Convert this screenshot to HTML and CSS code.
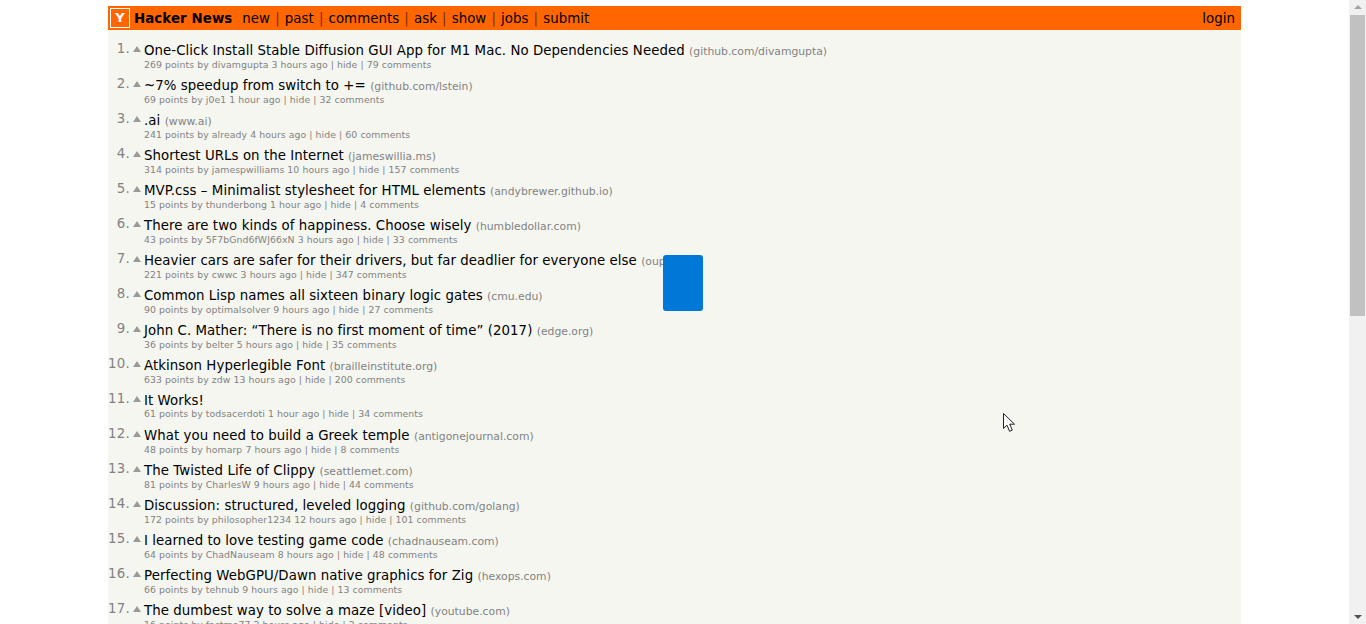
FILE: index.html
```html
<!DOCTYPE html>
<html lang="en">
<head>
<meta charset="utf-8">
<title>Hacker News</title>
<link rel="stylesheet" href="styles.css">
</head>
<body>
<div class="page">
  <div class="viewport">
    <div class="main">
      <header class="bar">
        <span class="logo">Y</span>
        <b class="brand">Hacker News</b>
        <nav class="nav"><a>new</a><i>|</i><a>past</a><i>|</i><a>comments</a><i>|</i><a>ask</a><i>|</i><a>show</a><i>|</i><a>jobs</a><i>|</i><a>submit</a></nav>
        <a class="login">login</a>
      </header>
      <ol class="list">
        <li class="row"><span class="rank">1.</span><span class="up"></span><div class="body"><div class="title"><a>One-Click Install Stable Diffusion GUI App for M1 Mac. No Dependencies Needed</a> <span class="site">(github.com/divamgupta)</span></div><div class="sub">269 points by divamgupta 3 hours ago | hide | 79 comments</div></div></li>
        <li class="row"><span class="rank">2.</span><span class="up"></span><div class="body"><div class="title"><a>~7% speedup from switch to +=</a> <span class="site">(github.com/lstein)</span></div><div class="sub">69 points by j0e1 1 hour ago | hide | 32 comments</div></div></li>
        <li class="row"><span class="rank">3.</span><span class="up"></span><div class="body"><div class="title"><a>.ai</a> <span class="site">(www.ai)</span></div><div class="sub">241 points by already 4 hours ago | hide | 60 comments</div></div></li>
        <li class="row"><span class="rank">4.</span><span class="up"></span><div class="body"><div class="title"><a>Shortest URLs on the Internet</a> <span class="site">(jameswillia.ms)</span></div><div class="sub">314 points by jamespwilliams 10 hours ago | hide | 157 comments</div></div></li>
        <li class="row"><span class="rank">5.</span><span class="up"></span><div class="body"><div class="title"><a>MVP.css – Minimalist stylesheet for HTML elements</a> <span class="site">(andybrewer.github.io)</span></div><div class="sub">15 points by thunderbong 1 hour ago | hide | 4 comments</div></div></li>
        <li class="row"><span class="rank">6.</span><span class="up"></span><div class="body"><div class="title"><a>There are two kinds of happiness. Choose wisely</a> <span class="site">(humbledollar.com)</span></div><div class="sub">43 points by 5F7bGnd6fWJ66xN 3 hours ago | hide | 33 comments</div></div></li>
        <li class="row"><span class="rank">7.</span><span class="up"></span><div class="body"><div class="title"><a>Heavier cars are safer for their drivers, but far deadlier for everyone else</a> <span class="site">(oup.com)</span></div><div class="sub">221 points by cwwc 3 hours ago | hide | 347 comments</div></div></li>
        <li class="row"><span class="rank">8.</span><span class="up"></span><div class="body"><div class="title"><a>Common Lisp names all sixteen binary logic gates</a> <span class="site">(cmu.edu)</span></div><div class="sub">90 points by optimalsolver 9 hours ago | hide | 27 comments</div></div></li>
        <li class="row"><span class="rank">9.</span><span class="up"></span><div class="body"><div class="title"><a>John C. Mather: “There is no first moment of time” (2017)</a> <span class="site">(edge.org)</span></div><div class="sub">36 points by belter 5 hours ago | hide | 35 comments</div></div></li>
        <li class="row"><span class="rank">10.</span><span class="up"></span><div class="body"><div class="title"><a>Atkinson Hyperlegible Font</a> <span class="site">(brailleinstitute.org)</span></div><div class="sub">633 points by zdw 13 hours ago | hide | 200 comments</div></div></li>
        <li class="row"><span class="rank">11.</span><span class="up"></span><div class="body"><div class="title"><a>It Works!</a></div><div class="sub">61 points by todsacerdoti 1 hour ago | hide | 34 comments</div></div></li>
        <li class="row"><span class="rank">12.</span><span class="up"></span><div class="body"><div class="title"><a>What you need to build a Greek temple</a> <span class="site">(antigonejournal.com)</span></div><div class="sub">48 points by homarp 7 hours ago | hide | 8 comments</div></div></li>
        <li class="row"><span class="rank">13.</span><span class="up"></span><div class="body"><div class="title"><a>The Twisted Life of Clippy</a> <span class="site">(seattlemet.com)</span></div><div class="sub">81 points by CharlesW 9 hours ago | hide | 44 comments</div></div></li>
        <li class="row"><span class="rank">14.</span><span class="up"></span><div class="body"><div class="title"><a>Discussion: structured, leveled logging</a> <span class="site">(github.com/golang)</span></div><div class="sub">172 points by philosopher1234 12 hours ago | hide | 101 comments</div></div></li>
        <li class="row"><span class="rank">15.</span><span class="up"></span><div class="body"><div class="title"><a>I learned to love testing game code</a> <span class="site">(chadnauseam.com)</span></div><div class="sub">64 points by ChadNauseam 8 hours ago | hide | 48 comments</div></div></li>
        <li class="row"><span class="rank">16.</span><span class="up"></span><div class="body"><div class="title"><a>Perfecting WebGPU/Dawn native graphics for Zig</a> <span class="site">(hexops.com)</span></div><div class="sub">66 points by tehnub 9 hours ago | hide | 13 comments</div></div></li>
        <li class="row"><span class="rank">17.</span><span class="up"></span><div class="body"><div class="title"><a>The dumbest way to solve a maze [video]</a> <span class="site">(youtube.com)</span></div><div class="sub">16 points by fastmo77 2 hours ago | hide | 2 comments</div></div></li>
      </ol>
    </div>
    <div class="blue-box"></div>
    <svg class="cursor" width="14" height="21" viewBox="0 0 14 21"><path d="M1.5 1.5V16.5L5 13.2L7.6 19.3L10.3 18.1L7.7 12.2H12.5Z" fill="#fff" stroke="#222" stroke-width="1"/></svg>
  </div>
  <div class="scrollbar">
    <span class="arrow arrow-up"></span>
    <div class="track"><div class="thumb"></div></div>
    <span class="arrow arrow-down"></span>
  </div>
</div>
</body>
</html>
```
FILE: styles.css
```css
* { box-sizing: border-box; }
html, body { margin: 0; height: 100%; overflow: hidden; background: #fff; }
body { font-family: "DejaVu Sans", Verdana, sans-serif; }
.page { display: flex; height: 624px; }
.viewport { position: relative; flex: 1; min-width: 0; padding-top: 6px; overflow: hidden; }
.main { width: 1133px; margin-left: 108px; background: #f5f6f0; height: 800px; }
.bar { display: flex; align-items: center; height: 24px; background: #ff6600; padding: 0 2px; color: #000; font-size: 13.33px; letter-spacing: .05px; }
.logo { width: 20px; height: 20px; border: 1px solid #fff; color: #fff; font-weight: bold; font-size: 13px; line-height: 18px; letter-spacing: 0; text-align: center; flex: none; }
.brand { margin-left: 4px; font-size: 13.33px; letter-spacing: .1px; }
.nav { display: flex; margin-left: 10px; }
.nav i { font-style: normal; margin: 0 5.1px; color: #7a2e00; }
.login { margin-left: auto; margin-right: 4px; }
.list { list-style: none; margin: 0; padding: 6px 0 0 0; }
.row { display: flex; height: 35px; align-items: flex-start; }
.rank { width: 22px; flex: none; text-align: right; font-size: 13.33px; color: #828282; margin-top: 3px; line-height: 20px; letter-spacing: .3px; }
.up { flex: none; width: 0; height: 0; margin: 10px 3px 0 3px; border-left: 4px solid transparent; border-right: 4px solid transparent; border-bottom: 6px solid #9a9a9a; }
.body { min-width: 0; padding-top: 8px; }
.title { font-size: 13.33px; letter-spacing: .065px; line-height: 13px; color: #000; white-space: nowrap; }
.site { font-size: 10.8px; letter-spacing: 0; color: #828282; }
.sub { font-size: 9.33px; letter-spacing: .07px; line-height: 13px; color: #828282; white-space: nowrap; }
.blue-box { position: absolute; left: 663px; top: 255px; width: 40px; height: 56px; background: #0078d7; border-radius: 3px; }
.cursor { position: absolute; left: 1002px; top: 412px; }
.scrollbar { width: 17px; flex: none; background: #f1f1f1; display: flex; flex-direction: column; align-items: center; }
.track { flex: 1; width: 15px; }
.thumb { height: 301px; background: #c1c1c1; }
.arrow { flex: none; height: 15px; width: 15px; position: relative; }
.arrow::after { content: ""; position: absolute; left: 4px; top: 5px; border-left: 4px solid transparent; border-right: 4px solid transparent; }
.arrow-up::after { border-bottom: 4px solid #a3a3a3; }
.arrow-down::after { top: 6px; border-top: 4px solid #505050; }
```
